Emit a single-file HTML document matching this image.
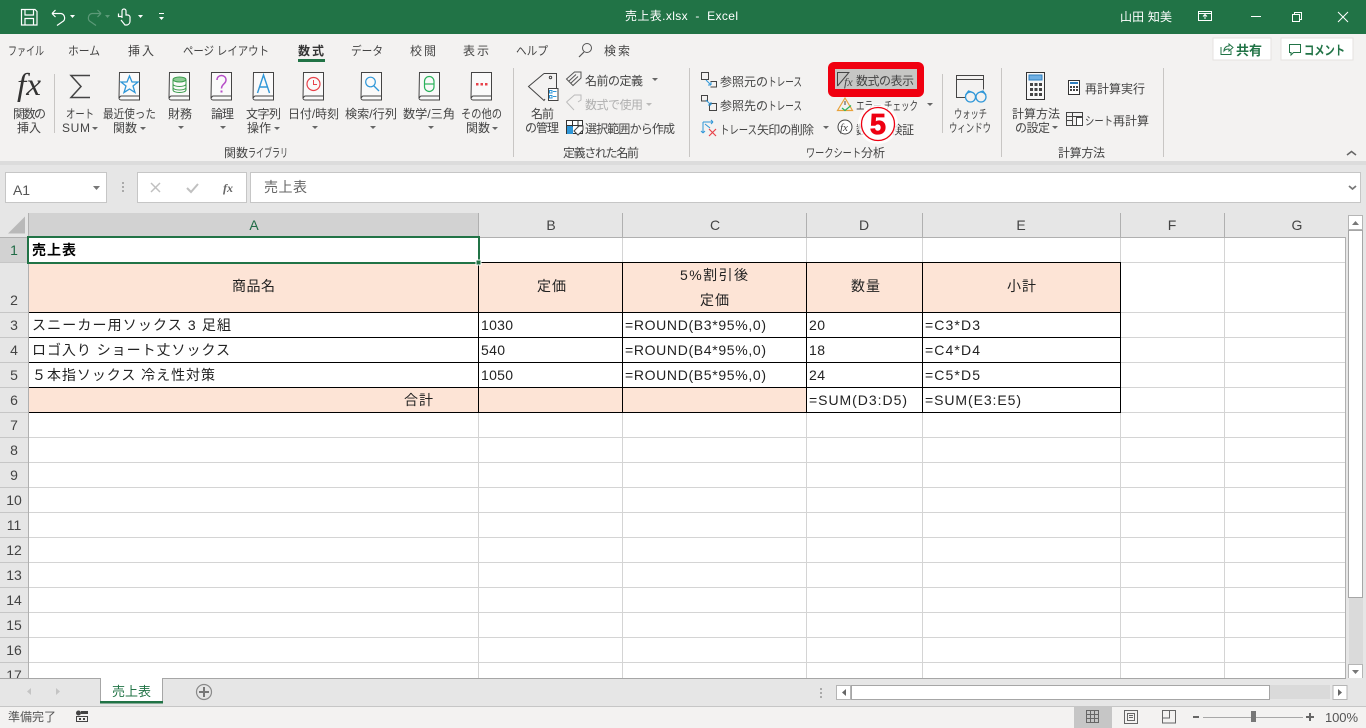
<!DOCTYPE html>
<html lang="ja"><head><meta charset="utf-8"><title>売上表.xlsx - Excel</title>
<style>
html,body{margin:0;padding:0;width:1366px;height:728px;overflow:hidden;background:#e6e6e6}
svg{display:block}
text{font-family:"Liberation Sans","Noto Sans CJK JP",sans-serif;font-size:12px;fill:#444;white-space:pre}
.w text,text.w{fill:#fff}
.c text{font-size:14px;fill:#222}
.h text{font-size:14px;fill:#444;text-anchor:middle}
.e{shape-rendering:crispEdges}
</style></head><body>
<svg width="1366" height="728" viewBox="0 0 1366 728" xmlns="http://www.w3.org/2000/svg">
<defs>
<g id="book"><path d="M.5.5h20v27.500h-18.500a2 2 0 0 1-2-2z" fill="#fafafa" stroke="#444"/><path d="M.5 26a2 2 0 0 1 2-2h18" fill="none" stroke="#444"/></g>
<path id="ar" d="M-3 0h6l-3 3z" fill="#666"/>
<clipPath id="gc"><rect x="0" y="213" width="1346" height="465"/></clipPath>
</defs>

<!-- title bar -->
<rect class="e" width="1366" height="34" fill="#217346"/>
<g fill="none" stroke="#fff" stroke-width="1.200">
<path d="M21.500 9.500h13.500l2 2v13.500h-15.500z"/><path d="M25 9.500v5.500h8.500v-5.500M25 25v-6.500h8.500v6.500"/>
<path d="M52 13.500l3.500-3.500M52 13.500l3.500 3.500M52 13.500h9a4.500 4.500 0 0 1 1 8.500l-5 3.500"/>
<g stroke="#5c9a78"><path d="M101 13.500l-3.500-3.500M101 13.500l-3.500 3.500M101 13.500h-9a4.500 4.500 0 0 0-1 8.500l5 3.500"/></g>
<path d="M122 18v-7a2 2 0 0 1 4 0v4h2a2.500 2.500 0 0 1 2 3v3a4 4 0 0 1-3 4h-2l-4-5M118.500 13.500v3h3"/>
</g>
<path d="M70 15h5l-2.500 3z M138 15h5l-2.500 3z M159 17h5l-2.500 3z" fill="#fff"/>
<rect class="e" x="159" y="13" width="5" height="1" fill="#fff"/>
<path d="M105 15h5l-2.500 3z" fill="#5c9a78"/>
<g class="w">
<text x="625" y="20" textLength="113">売上表.xlsx  -  Excel</text>
<text x="1120" y="21" textLength="52">山田 知美</text>
</g>
<g fill="none" stroke="#fff" stroke-width="1">
<path class="e" d="M1198.500 11.500h13v9h-13zM1198.500 13.500h13"/><path d="M1205 19v-4.500M1203 16.500l2-2 2 2"/>
<path class="e" d="M1251 16.500h10"/>
<path class="e" d="M1292.500 14.500h7v7h-7zM1294.500 14.500v-2h7v7h-2"/>
<path d="M1338 12l10 10M1348 12l-10 10"/>
</g>

<!-- ribbon -->
<rect class="e" y="34" width="1366" height="127" fill="#f3f2f1"/>
<rect class="e" y="161" width="1366" height="4" fill="#dcdcdc"/>
<rect class="e" y="165" width="1366" height="48" fill="#e6e6e6"/>

<g fill="#444">
<text x="8" y="55" textLength="36" lengthAdjust="spacingAndGlyphs">ファイル</text>
<text x="68" y="55" textLength="32" lengthAdjust="spacingAndGlyphs">ホーム</text>
<text x="128" y="55" textLength="26">挿入</text>
<text x="183" y="55" textLength="86" lengthAdjust="spacingAndGlyphs">ページ レイアウト</text>
<text x="298" y="55" textLength="26" font-weight="700" style="fill:#333">数式</text>
<text x="351" y="55" textLength="32" lengthAdjust="spacingAndGlyphs">データ</text>
<text x="410" y="55" textLength="26">校閲</text>
<text x="463" y="55" textLength="26">表示</text>
<text x="516" y="55" textLength="32" lengthAdjust="spacingAndGlyphs">ヘルプ</text>
<text x="604" y="55" textLength="26">検索</text>
</g>
<rect class="e" x="298" y="59" width="27" height="3" fill="#217346"/>
<circle cx="587" cy="48" r="4.500" fill="none" stroke="#555"/><path d="M584 52l-5 5" stroke="#555" stroke-width="1.200"/>

<!-- share/comment -->
<rect class="e" x="1213" y="38" width="58" height="22" fill="#fff" stroke="#e4e2e0"/>
<rect class="e" x="1281" y="38" width="72" height="22" fill="#fff" stroke="#e4e2e0"/>
<path d="M1221 47v7.500h10v-4M1224 51c0-3 2-5 5-5v-2l4 3.500-4 3.500v-2c-2 0-4 .5-5 2z" fill="none" stroke="#217346"/>
<text x="1236" y="55" textLength="26" font-weight="700" style="fill:#217346;font-size:13px">共有</text>
<path d="M1289.500 44.500h11v8h-7l-2.500 2.500v-2.500h-1.500z" fill="none" stroke="#217346"/>
<text x="1304" y="55" textLength="41" lengthAdjust="spacingAndGlyphs" font-weight="700" style="fill:#217346;font-size:13px">コメント</text>

<!-- separators -->
<g class="e" fill="#c8c6c4">
<rect x="54" y="74" width="1" height="59"/><rect x="513" y="68" width="1" height="89"/>
<rect x="689" y="68" width="1" height="89"/><rect x="942" y="74" width="1" height="59"/>
<rect x="1001" y="68" width="1" height="89"/><rect x="1163" y="68" width="1" height="89"/>
</g>

<!-- functions group -->
<text x="17" y="95" style="font-family:'Liberation Serif',serif;font-size:32px;font-style:italic;fill:#333" textLength="24" lengthAdjust="spacingAndGlyphs">fx</text>
<text x="13" y="118" textLength="33">関数の</text><text x="17" y="132" textLength="24">挿入</text>
<path d="M90 75.500h-19l10 11-10 11h19" fill="none" stroke="#444" stroke-width="1.500"/>
<text x="66" y="118" textLength="28" lengthAdjust="spacingAndGlyphs">オート</text><text x="62" y="132" textLength="28">SUM</text><use href="#ar" x="95" y="127"/>
<use href="#book" x="119" y="72"/>
<path d="M129.500 76l2.500 6h6l-5 4 2 6.500-5.500-3.500-5.500 3.500 2-6.500-5-4h6z" fill="none" stroke="#2f97d8" stroke-width="1.300"/>
<text x="103" y="118" textLength="53" lengthAdjust="spacingAndGlyphs">最近使った</text><text x="113" y="132" textLength="24">関数</text><use href="#ar" x="143" y="127"/>
<use href="#book" x="169" y="72"/>
<g fill="#8fcb96" stroke="#3a9b4c"><ellipse cx="179.500" cy="79.500" rx="6.500" ry="2.500"/><path d="M173 80v10c0 1.500 3 2.500 6.500 2.500s6.500-1 6.500-2.500v-10M173 84c0 1.500 3 2.500 6.500 2.500s6.500-1 6.500-2.500M173 87.500c0 1.500 3 2.500 6.500 2.500s6.500-1 6.500-2.500" fill="none"/></g>
<text x="168" y="118" textLength="24">財務</text><use href="#ar" x="181" y="126"/>
<use href="#book" x="211" y="72"/>
<path d="M217 80c0-6 9-6 9 0 0 4-4.500 4-4.500 8.500" fill="none" stroke="#b64fc8" stroke-width="1.500"/><rect x="220.500" y="90.500" width="2" height="2" fill="#b64fc8"/>
<text x="211" y="118" textLength="23">論理</text><use href="#ar" x="223" y="126"/>
<use href="#book" x="253" y="72"/>
<path d="M257.500 93l6-18 6 18M259.500 87h8" fill="none" stroke="#2f97d8" stroke-width="1.400"/>
<text x="246" y="118" textLength="35">文字列</text><text x="247" y="132" textLength="24">操作</text><use href="#ar" x="277" y="127"/>
<use href="#book" x="303" y="72"/>
<circle cx="313.500" cy="84" r="6.500" fill="none" stroke="#e8424a" stroke-width="1.200"/><path d="M313.500 80v4.500h3.500" fill="none" stroke="#e8424a"/>
<text x="288" y="118" textLength="51" lengthAdjust="spacingAndGlyphs">日付/時刻</text><use href="#ar" x="315" y="126"/>
<use href="#book" x="361" y="72"/>
<circle cx="370.500" cy="82" r="4.800" fill="none" stroke="#2f97d8" stroke-width="1.200"/><path d="M374 86l5 5" stroke="#2f97d8" stroke-width="1.300"/>
<text x="345" y="118" textLength="52" lengthAdjust="spacingAndGlyphs">検索/行列</text><use href="#ar" x="373" y="126"/>
<use href="#book" x="419" y="72"/>
<rect x="424.500" y="76.500" width="9.500" height="15" rx="4.750" fill="none" stroke="#2ab25b" stroke-width="1.200"/><path d="M424.500 84h9.500" stroke="#2ab25b" stroke-width="1.200"/>
<text x="403" y="118" textLength="52" lengthAdjust="spacingAndGlyphs">数学/三角</text><use href="#ar" x="431" y="126"/>
<use href="#book" x="471" y="72"/>
<path d="M476 83h2.500v2.500h-2.500zM480.500 83h2.500v2.500h-2.500zM485 83h2.500v2.500h-2.500z" fill="#e8424a"/>
<text x="461" y="118" textLength="41" lengthAdjust="spacingAndGlyphs">その他の</text><text x="466" y="132" textLength="24">関数</text><use href="#ar" x="495" y="127"/>
<text x="224" y="157" textLength="24">関数</text><text x="248" y="157" textLength="40" lengthAdjust="spacingAndGlyphs">ライブラリ</text>

<!-- names group -->
<path d="M544 73.500h12.500v15M545 99l-1 1.500-15.500-14 15.500-13" fill="none" stroke="#444"/><circle cx="550.500" cy="77.500" r="1.200" fill="none" stroke="#444"/>
<rect class="e" x="548.500" y="88.500" width="9.500" height="12" fill="#fff" stroke="#444"/>
<path class="e" d="M549.500 90.500h2.500v2.500h-2.500zM549.500 95.500h2.500v2.500h-2.500z" fill="none" stroke="#2f97d8"/><path class="e" d="M553 91.500h3.500M553 96.500h3.500" stroke="#2f97d8"/>
<text x="531" y="118" textLength="23">名前</text><text x="525" y="132" textLength="34">の管理</text>
<path d="M566.500 79l8-7h6.500v6l-8 7.500z M569 81l7-6.500 M571 83l7-6.500" fill="none" stroke="#555"/>
<text x="585" y="85" textLength="58">名前の定義</text><use href="#ar" x="655" y="78"/>
<path d="M566.500 102l8-7h6.500v5l-3 2M574 110l-7.500-8" fill="none" stroke="#bbb"/>
<text x="585" y="109" textLength="58" style="fill:#b0b0b0">数式で使用</text><use href="#ar" x="649" y="103" style="opacity:.4"/>
<rect class="e" x="566.500" y="120.500" width="16" height="13" fill="#fff" stroke="#333"/><rect class="e" x="567" y="126" width="6" height="8" fill="#2f97d8"/>
<path class="e" d="M572.500 120.500v6M578 120.500v6M566.500 125.500h16" stroke="#333" fill="none"/>
<path d="M574 131l5-5h4v4l-5 5z" fill="#fff" stroke="#444"/>
<text x="585" y="133" textLength="90">選択範囲から作成</text>
<text x="563" y="157" textLength="76">定義された名前</text>

<!-- audit group -->
<g fill="none" stroke="#444">
<path class="e" d="M701.500 72.500h7v7h-7zM710.500 81.500h6v5.500h-6"/>
<path class="e" d="M701.500 95.500h6v5.500h-6zM709.500 103.500h7v7h-7z"/>
</g>
<path d="M706 80l5 5M711 85v-3M711 85h-3M706 100l5 5M711 105v-3M711 105h-3" fill="none" stroke="#2f97d8"/>
<text x="720" y="86" textLength="48">参照元の</text><text x="768" y="86" textLength="34" lengthAdjust="spacingAndGlyphs">トレース</text>
<text x="720" y="110" textLength="48">参照先の</text><text x="768" y="110" textLength="34" lengthAdjust="spacingAndGlyphs">トレース</text>
<path d="M703 122h10M713 122l-2-2M713 122l-2 2M703 122v11M703 133l-2-2M703 133l2-2M705 124l5 4" fill="none" stroke="#2f97d8"/>
<path d="M709 129l7 7M716 129l-7 7" stroke="#e8424a" stroke-width="1.200"/>
<text x="720" y="134" textLength="37" lengthAdjust="spacingAndGlyphs">トレース</text><text x="757" y="134" textLength="57">矢印の削除</text><use href="#ar" x="826" y="126"/>
<!-- show formulas -->
<rect x="828" y="62" width="96" height="35" fill="#f00010" rx="6"/>
<rect class="e" x="835" y="69" width="82" height="20" fill="#c6c6c4"/>
<path d="M837.500 86v-13.500h12M837.500 86l11-13" fill="none" stroke="#444"/>
<text x="844" y="86" style="font-family:'Liberation Serif',serif;font-size:12px;font-style:italic;fill:#444">fx</text>
<text x="856" y="85" textLength="58">数式の表示</text>
<!-- error check -->
<path d="M845 98l7.500 12.500h-15z" fill="none" stroke="#e8a23b" stroke-width="1.200"/><path d="M845 101v4" stroke="#444"/><path d="M842 108l3 2.500 6-5" fill="none" stroke="#2ab25b" stroke-width="1.200"/>
<text x="856" y="110" textLength="62" lengthAdjust="spacingAndGlyphs">エラー チェック</text><use href="#ar" x="930" y="103"/>
<circle cx="845" cy="127" r="7" fill="#fff" stroke="#444"/><text x="840" y="131" style="font-family:'Liberation Serif',serif;font-size:11px;font-style:italic;fill:#444">fx</text>
<text x="856" y="134" textLength="58">数式の検証</text>
<text x="806" y="157" textLength="55" lengthAdjust="spacingAndGlyphs">ワークシート</text><text x="861" y="157" textLength="24">分析</text>
<!-- step badge -->
<circle cx="878" cy="124" r="20" fill="#fff" opacity=".8"/>
<circle cx="878" cy="124" r="16.500" fill="#fff" stroke="#ee0011" stroke-width="1.300"/>
<text x="878" y="134" text-anchor="middle" style="font-size:29px;font-weight:700;fill:#ee0011;stroke:#ee0011;stroke-width:.8px">5</text>

<!-- watch -->
<path class="e" d="M965 97.500h-8.500v-22h27v14M956.500 79.500h27" fill="none" stroke="#444"/>
<g fill="none" stroke="#2f97d8" stroke-width="1.300"><circle cx="970.500" cy="97" r="5"/><circle cx="981" cy="97" r="5"/><path d="M965.500 95l3-4 3 1M980 92l3-1 3 4"/></g>
<text x="954" y="118" textLength="33" lengthAdjust="spacingAndGlyphs">ウォッチ</text><text x="949" y="132" textLength="42" lengthAdjust="spacingAndGlyphs">ウィンドウ</text>

<!-- calc -->
<rect class="e" x="1026.500" y="72.500" width="18" height="27" fill="#f8f8f8" stroke="#333"/>
<rect class="e" x="1029" y="75" width="13" height="5" fill="#6fb0e4" stroke="#2f7fbe" stroke-width="1"/>
<path class="e" d="M1030 83h3v3h-3zM1034.500 83h3v3h-3zM1039 83h3v3h-3zM1030 88h3v3h-3zM1034.500 88h3v3h-3zM1039 88h3v3h-3zM1030 93h3v3h-3zM1034.500 93h3v3h-3zM1039 93h3v3h-3z" fill="#444"/>
<text x="1012" y="118" textLength="48">計算方法</text><text x="1015" y="132" textLength="35">の設定</text><use href="#ar" x="1055" y="126"/>
<rect class="e" x="1068.500" y="80.500" width="11" height="14" fill="#fff" stroke="#333"/>
<rect class="e" x="1070" y="82" width="8" height="2" fill="#2f7fbe"/>
<path class="e" d="M1070 86h2v2h-2zM1073 86h2v2h-2zM1076 86h2v2h-2zM1070 89h2v2h-2zM1073 89h2v2h-2zM1076 89h2v2h-2z" fill="#444"/>
<text x="1085" y="93" textLength="60">再計算実行</text>
<path class="e" d="M1066.500 112.500h16v13h-16zM1066.500 116.500h16M1072.500 112.500v13M1066.500 120.500h6" fill="none" stroke="#444"/>
<rect class="e" x="1076.500" y="117.500" width="6" height="8" fill="#fff" stroke="#444"/>
<text x="1085" y="125" textLength="28" lengthAdjust="spacingAndGlyphs">シート</text><text x="1113" y="125" textLength="36">再計算</text>
<text x="1058" y="157" textLength="47">計算方法</text>
<path d="M1347 155l4.500-3.500 4.500 3.500" fill="none" stroke="#666" stroke-width="1.500"/>

<!-- formula bar -->
<rect class="e" x="5.500" y="172.500" width="101" height="30" fill="#fff" stroke="#c6c6c6"/>
<text x="13" y="195" textLength="17" style="font-size:14px;fill:#555">A1</text>
<path d="M93 186h7l-3.500 4z" fill="#777"/>
<g class="e" fill="#aaa"><rect x="122" y="182" width="2" height="2"/><rect x="122" y="186" width="2" height="2"/><rect x="122" y="190" width="2" height="2"/></g>
<rect class="e" x="137.500" y="172.500" width="109" height="30" fill="#fff" stroke="#c6c6c6"/>
<rect class="e" x="250.500" y="172.500" width="1110" height="30" fill="#fff" stroke="#c6c6c6"/>
<path d="M151 183l9 9M160 183l-9 9" stroke="#c0c0c0" stroke-width="1.500"/>
<path d="M187 188l4 4 7-8" fill="none" stroke="#c0c0c0" stroke-width="2"/>
<text x="223" y="192" style="font-family:'Liberation Serif',serif;font-size:12px;font-style:italic;font-weight:700;fill:#666">fx</text>
<text x="264" y="192" textLength="43" style="font-size:14px;fill:#666">売上表</text>
<path d="M1349 186l3.500 3 3.500-3" fill="none" stroke="#777" stroke-width="1.800"/>

<!-- sheet -->
<rect class="e" x="29" y="238" width="1316" height="440" fill="#fff"/>
<rect class="e" x="29" y="213" width="449" height="24" fill="#d2d2d2"/>
<rect class="e" x="0" y="238" width="28" height="24" fill="#d2d2d2"/>
<path d="M8 233.500l17-17v17z" fill="#b9b9b9"/>
<!-- gridlines -->
<g class="e" fill="#d4d4d4" clip-path="url(#gc)">
<rect x="29" y="262" width="1316" height="1"/><rect x="29" y="312" width="1316" height="1"/>
<rect x="29" y="337" width="1316" height="1"/><rect x="29" y="362" width="1316" height="1"/>
<rect x="29" y="387" width="1316" height="1"/><rect x="29" y="412" width="1316" height="1"/>
<rect x="29" y="437" width="1316" height="1"/><rect x="29" y="462" width="1316" height="1"/>
<rect x="29" y="487" width="1316" height="1"/><rect x="29" y="512" width="1316" height="1"/>
<rect x="29" y="537" width="1316" height="1"/><rect x="29" y="562" width="1316" height="1"/>
<rect x="29" y="587" width="1316" height="1"/><rect x="29" y="612" width="1316" height="1"/>
<rect x="29" y="637" width="1316" height="1"/><rect x="29" y="662" width="1316" height="1"/>
<rect x="478" y="238" width="1" height="440"/><rect x="622" y="238" width="1" height="440"/>
<rect x="806" y="238" width="1" height="440"/><rect x="922" y="238" width="1" height="440"/>
<rect x="1120" y="238" width="1" height="440"/><rect x="1224" y="238" width="1" height="440"/>
</g>
<!-- row header lines -->
<g class="e" fill="#c6c6c6">
<rect x="0" y="262" width="28" height="1"/><rect x="0" y="312" width="28" height="1"/>
<rect x="0" y="337" width="28" height="1"/><rect x="0" y="362" width="28" height="1"/>
<rect x="0" y="387" width="28" height="1"/><rect x="0" y="412" width="28" height="1"/>
<rect x="0" y="437" width="28" height="1"/><rect x="0" y="462" width="28" height="1"/>
<rect x="0" y="487" width="28" height="1"/><rect x="0" y="512" width="28" height="1"/>
<rect x="0" y="537" width="28" height="1"/><rect x="0" y="562" width="28" height="1"/>
<rect x="0" y="587" width="28" height="1"/><rect x="0" y="612" width="28" height="1"/>
<rect x="0" y="637" width="28" height="1"/><rect x="0" y="662" width="28" height="1"/>
</g>
<g class="e" fill="#b0b0b0">
<rect x="28" y="213" width="1" height="465"/><rect x="0" y="237" width="1346" height="1"/>
<rect x="478" y="213" width="1" height="24"/><rect x="622" y="213" width="1" height="24"/>
<rect x="806" y="213" width="1" height="24"/><rect x="922" y="213" width="1" height="24"/>
<rect x="1120" y="213" width="1" height="24"/><rect x="1224" y="213" width="1" height="24"/>
<rect x="1345" y="237" width="1" height="441"/>
</g>
<!-- fills -->
<g class="e" fill="#fde4d6">
<rect x="29" y="263" width="1091" height="49"/>
<rect x="29" y="388" width="777" height="24"/>
</g>
<!-- borders -->
<g class="e" fill="#000">
<rect x="29" y="262" width="1092" height="1"/>
<rect x="29" y="312" width="1092" height="1"/><rect x="29" y="337" width="1092" height="1"/>
<rect x="29" y="362" width="1092" height="1"/><rect x="29" y="387" width="1092" height="1"/>
<rect x="29" y="412" width="1092" height="1"/>
<rect x="478" y="262" width="1" height="151"/><rect x="622" y="262" width="1" height="151"/>
<rect x="806" y="262" width="1" height="151"/><rect x="922" y="262" width="1" height="151"/>
<rect x="1120" y="262" width="1" height="151"/>
</g>
<!-- col headers -->
<g class="h">
<text x="254" y="230" style="fill:#1f6b45">A</text><text x="551" y="230">B</text><text x="715" y="230">C</text>
<text x="864" y="230">D</text><text x="1021" y="230">E</text><text x="1172" y="230">F</text><text x="1297" y="230">G</text>
</g>
<!-- row headers -->
<g class="h" clip-path="url(#gc)">
<text x="14" y="255" style="fill:#1f6b45">1</text><text x="14" y="305">2</text><text x="14" y="330">3</text>
<text x="14" y="355">4</text><text x="14" y="380">5</text><text x="14" y="405">6</text><text x="14" y="430">7</text>
<text x="14" y="455">8</text><text x="14" y="480">9</text><text x="14" y="505">10</text><text x="14" y="530">11</text>
<text x="14" y="555">12</text><text x="14" y="580">13</text><text x="14" y="605">14</text><text x="14" y="630">15</text>
<text x="14" y="655">16</text><text x="14" y="680">17</text>
</g>
<!-- cells -->
<g class="c">
<text x="32" y="255" textLength="44" style="font-weight:700;fill:#000">売上表</text>
<text x="232" y="291" textLength="43">商品名</text>
<text x="537" y="291" textLength="29">定価</text>
<text x="680" y="280" textLength="68">5%割引後</text>
<text x="700" y="305" textLength="29">定価</text>
<text x="851" y="291" textLength="29">数量</text>
<text x="1007" y="291" textLength="29">小計</text>
<text x="32" y="330" textLength="199">スニーカー用ソックス 3 足組</text>
<text x="32" y="355" textLength="198">ロゴ入り ショート丈ソックス</text>
<text x="32" y="380" textLength="183">５本指ソックス 冷え性対策</text>
<text x="404" y="405" textLength="29">合計</text>
<text x="481" y="330" textLength="32">1030</text><text x="481" y="355" textLength="24">540</text><text x="481" y="380" textLength="32">1050</text>
<text x="625" y="330" textLength="141">=ROUND(B3*95%,0)</text>
<text x="625" y="355" textLength="141">=ROUND(B4*95%,0)</text>
<text x="625" y="380" textLength="141">=ROUND(B5*95%,0)</text>
<text x="809" y="330" textLength="16">20</text><text x="809" y="355" textLength="16">18</text><text x="809" y="380" textLength="16">24</text>
<text x="809" y="405" textLength="98">=SUM(D3:D5)</text>
<text x="925" y="330" textLength="55">=C3*D3</text><text x="925" y="355" textLength="55">=C4*D4</text><text x="925" y="380" textLength="55">=C5*D5</text>
<text x="925" y="405" textLength="96">=SUM(E3:E5)</text>
</g>
<!-- selection -->
<rect class="e" x="28" y="237" width="451" height="26" fill="none" stroke="#217346" stroke-width="2"/>
<rect class="e" x="476" y="260" width="5" height="5" fill="#217346" stroke="#fff" stroke-width="1"/>

<!-- vscroll -->
<rect class="e" x="1346" y="213" width="20" height="494" fill="#e6e6e6"/>
<rect class="e" x="1349" y="231" width="14" height="434" fill="#dadada"/>
<rect class="e" x="1348.500" y="215.500" width="14" height="14" fill="#fff" stroke="#b5b5b5"/>
<path d="M1352 225h7l-3.500-4z" fill="#777"/>
<rect class="e" x="1348.500" y="230.500" width="14" height="367" fill="#fff" stroke="#a6a6a6"/>
<rect class="e" x="1348.500" y="664.500" width="14" height="14" fill="#fff" stroke="#b5b5b5"/>
<path d="M1352 670h7l-3.500 4z" fill="#777"/>

<!-- tab strip -->
<rect class="e" y="678" width="1346" height="1" fill="#a6a6a6"/>
<rect class="e" y="679" width="1366" height="27" fill="#e6e6e6"/>
<rect class="e" x="1346" y="678" width="20" height="1" fill="#e6e6e6"/>
<rect class="e" x="100" y="678" width="63" height="25" fill="#a6a6a6"/>
<rect class="e" x="101" y="678" width="61" height="24" fill="#fff"/>
<rect class="e" x="100" y="701" width="63" height="2.500" fill="#217346"/>
<text x="112" y="696" textLength="39" style="font-size:13px;fill:#217346">売上表</text>
<circle cx="204" cy="692" r="7.500" fill="none" stroke="#8a8a8a" stroke-width="1.200"/>
<path class="e" d="M199 691h10v2h-10zM203 687h2v10h-2z" fill="#777"/>
<path d="M31 688v7l-4-3.500z" fill="#c4c4c4"/><path d="M56 688v7l4-3.500z" fill="#c4c4c4"/>
<g class="e" fill="#aaa"><rect x="820" y="688" width="2" height="2"/><rect x="820" y="692" width="2" height="2"/><rect x="820" y="696" width="2" height="2"/></g>
<rect class="e" x="851" y="685" width="479" height="14" fill="#dadada"/>
<rect class="e" x="836.500" y="685.500" width="14" height="14" fill="#fff" stroke="#b5b5b5"/>
<path d="M846 689v7l-4-3.500z" fill="#666"/>
<rect class="e" x="851.500" y="685.500" width="418" height="14" fill="#fff" stroke="#a6a6a6"/>
<rect class="e" x="1333" y="685.500" width="14" height="14" fill="#fff" stroke="#b5b5b5"/>
<path d="M1338 689v7l4-3.500z" fill="#666"/>

<!-- status bar -->
<rect class="e" y="706" width="1366" height="1" fill="#c6c6c6"/>
<rect class="e" y="707" width="1366" height="21" fill="#f3f2f1"/>
<text x="8" y="721" textLength="48" style="fill:#555">準備完了</text>
<circle cx="78.500" cy="713" r="2.500" fill="#444"/>
<path class="e" d="M81 711h7v3h-7zM76 716h12v1h-12zM76 716h1v6h-1zM87 716h1v6h-1zM76 721h12v1h-12zM79 718h2v2h-2zM83 718h2v2h-2z" fill="#444"/>
<rect class="e" x="1074" y="707" width="38" height="21" fill="#c6c6c6"/>
<path class="e" d="M1086.500 710.500h12v12h-12zM1086.500 714.500h12M1086.500 718.500h12M1090.500 710.500v12M1094.500 710.500v12" fill="none" stroke="#666"/>
<path class="e" d="M1124.500 710.500h13v13h-13zM1127.500 713.500h7v7h-7zM1129 715.500h4M1129 717.500h4" fill="none" stroke="#666"/>
<path class="e" d="M1162.500 710.500h13v12.500h-13zM1169.500 710.500v7.500h-7" fill="none" stroke="#666"/>
<rect class="e" x="1193" y="716" width="6" height="2" fill="#666"/>
<rect class="e" x="1203" y="717" width="100" height="1" fill="#a8a8a8"/>
<rect class="e" x="1251" y="711" width="5" height="11" fill="#777"/>
<path class="e" d="M1306 716h8v2h-8zM1309 713h2v8h-2z" fill="#666"/>
<text x="1325" y="722" textLength="33" style="font-size:13px;fill:#555">100%</text>
</svg>
</body></html>
